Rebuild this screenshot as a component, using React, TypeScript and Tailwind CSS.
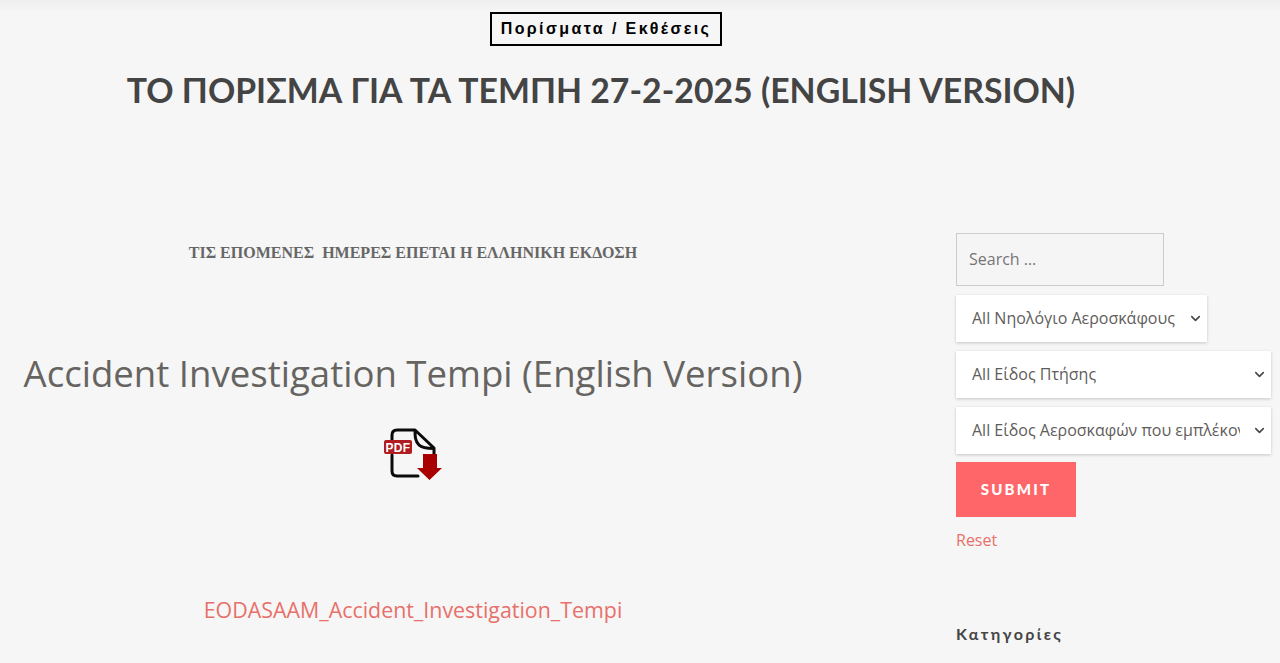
import { ChevronDown } from "lucide-react";

const selects = [
  { label: "All Νηολόγιο Αεροσκάφους", width: "w-[251px]" },
  { label: "All Είδος Πτήσης", width: "w-[315px]" },
  { label: "All Είδος Αεροσκαφών που εμπλέκονται", width: "w-[315px]" },
];

function PdfIcon() {
  return (
    <svg width="60" height="54" viewBox="0 0 60 54" fill="none">
      <path
        d="M9 12V7C9 3.500 11 2 14 2H32L51 20V27M32 2C32 8 32 13 36 17C39 20 44 20.500 51 20.500M9 27V43C9 46.500 11 48 14 48H35"
        stroke="#0b0b0b"
        strokeWidth="3"
        strokeLinecap="round"
        strokeLinejoin="round"
      />
      <rect x="1" y="12" width="28" height="14" rx="2" fill="#b01c20" />
      <text
        x="15"
        y="23.500"
        textAnchor="middle"
        fill="#fff"
        fontSize="12"
        fontWeight="700"
        letterSpacing="0.400"
        fontFamily="'Liberation Sans', sans-serif"
      >
        PDF
      </text>
      <path d="M40 26H54V40H59L46.500 52L34 40H40Z" fill="#a80000" />
    </svg>
  );
}

export default function App() {
  return (
    <div className="h-[663px] overflow-hidden bg-[#f6f6f6] bg-gradient-to-b from-[#eeeeee] to-[#f6f6f6] bg-[length:100%_12px] bg-no-repeat font-['Open_Sans',sans-serif] text-[#5f5d5b]">
      <header className="flex flex-col items-center pt-3 pr-[78px]">
        <div className="ml-[10px] border-2 border-black px-[9px] py-[3px] font-['Liberation_Sans',sans-serif] text-[16px] leading-[24px] font-bold tracking-[2.400px] text-black">
          Πορίσματα / Εκθέσεις
        </div>
        <h1 className="mt-[23px] font-['Lato',sans-serif] text-[33.800px] leading-[42px] font-bold whitespace-nowrap text-[#444444]">
          ΤΟ ΠΟΡΙΣΜΑ ΓΙΑ ΤΑ ΤΕΜΠΗ 27-2-2025 (ENGLISH VERSION)
        </h1>
      </header>

      <div className="mt-[122px] flex">
        <main className="flex w-[826px] flex-col items-center">
          <p className="mt-[9px] font-['Liberation_Serif',serif] text-[16px] leading-[22px] font-bold whitespace-pre text-[#666666]">
            ΤΙΣ ΕΠΟΜΕΝΕΣ  ΗΜΕΡΕΣ ΕΠΕΤΑΙ Η ΕΛΛΗΝΙΚΗ ΕΚΔΟΣΗ
          </p>
          <h2 className="mt-[84px] text-[36.600px] leading-[50px] whitespace-nowrap text-[#666461]">
            Accident Investigation Tempi (English Version)
          </h2>
          <div className="mt-[30px]">
            <PdfIcon />
          </div>
          <a className="mt-[112px] text-[21.400px] leading-[32px] text-[#e8706a]">
            EODASAAM_Accident_Investigation_Tempi
          </a>
        </main>

        <aside className="ml-[130px] w-[315px] shrink-0">
          <input
            placeholder="Search …"
            className="h-[53px] w-[208px] border border-[#cccccc] bg-[#f5f5f5] px-3 pb-[2px] text-[16px] placeholder:text-[#757575]"
          />
          <div className="mt-[9px] flex flex-col items-start gap-[9px]">
            {selects.map((select) => (
              <div key={select.label} className={`relative ${select.width}`}>
                <select className="h-[47px] w-full appearance-none bg-white pr-[31px] pb-[2px] pl-[16px] text-[16px] text-[#5f5d5b] shadow-[0_1px_3px_rgba(0,0,0,0.2)]">
                  <option>{select.label}</option>
                </select>
                <ChevronDown
                  size={15}
                  strokeWidth={2.500}
                  className="pointer-events-none absolute top-[16px] right-[4px] text-[#444444]"
                />
              </div>
            ))}
          </div>
          <button className="mt-2 h-[55px] w-[120px] bg-[#ff666a] font-['Lato',sans-serif] text-[15px] font-black tracking-[2.200px] text-white">
            SUBMIT
          </button>
          <a className="mt-[10px] block text-[16px] leading-[27px] text-[#e8706a]">Reset</a>
          <h3 className="mt-[68px] font-['Lato',sans-serif] text-[16px] leading-[24px] font-bold tracking-[2.400px] text-[#444444]">
            Κατηγορίες
          </h3>
        </aside>
      </div>
    </div>
  );
}
